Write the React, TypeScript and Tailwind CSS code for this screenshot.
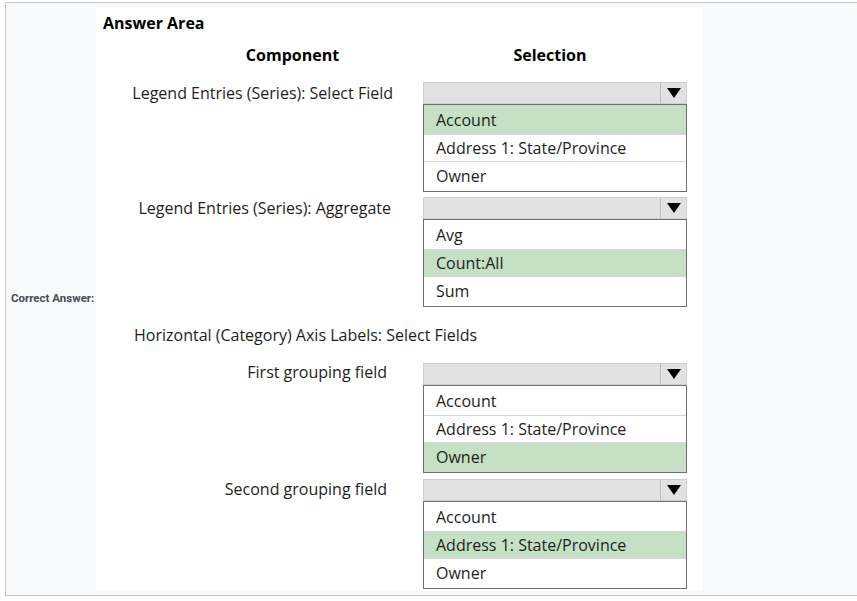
import React from 'react';

type Row = {
  label: string;
  pad: string;
  options: string[];
  correct: number;
};

const ArrowDown = () => (
  <svg width="14" height="10" viewBox="0 0 14 10" aria-hidden="true">
    <polygon points="0,0 14,0 7,10" fill="#000" />
  </svg>
);

// item heights: first/middle/last rows of the open list
const itemHeights = ['h-[29px] pt-[1px]', 'h-[27px] border-t border-[#d6d6d6]', 'h-[30px] border-t border-[#d6d6d6] pb-[1px]'];

const Dropdown: React.FC<{ options: string[]; correct: number }> = ({ options, correct }) => (
  <div className="w-[264px]">
    <div className="flex h-[22px] border border-[#cfcfcf] bg-[#e1e1e1]">
      <div className="flex-1" />
      <div className="flex w-[26px] items-center justify-center border-l border-[#bcbcbc]">
        <ArrowDown />
      </div>
    </div>
    <div className="border border-[#6f6f6f] bg-white">
      {options.map((opt, i) => (
        <div
          key={opt}
          className={`flex items-center pl-[12px] text-[#1e1e1e] ${itemHeights[i]} ${
            i === correct ? 'bg-[#c5e0c4]' : 'bg-white'
          }`}
        >
          {opt}
        </div>
      ))}
    </div>
  </div>
);

const fields = ['Account', 'Address 1: State/Province', 'Owner'];

const legendRows: Row[] = [
  { label: 'Legend Entries (Series): Select Field', pad: 'pr-0', options: fields, correct: 0 },
  { label: 'Legend Entries (Series): Aggregate', pad: 'pr-[2px]', options: ['Avg', 'Count:All', 'Sum'], correct: 1 },
];

const axisRows: Row[] = [
  { label: 'First grouping field', pad: 'pr-[6px] pb-[4px]', options: fields, correct: 2 },
  { label: 'Second grouping field', pad: 'pr-[6px] pb-[2px]', options: fields, correct: 1 },
];

const QuestionRow: React.FC<{ row: Row }> = ({ row }) => (
  <div className="flex gap-[30px]">
    <div className={`flex h-[22px] w-[297px] items-center justify-end ${row.pad}`}>
      <span className="whitespace-nowrap">{row.label}</span>
    </div>
    <Dropdown options={row.options} correct={row.correct} />
  </div>
);

export default function App() {
  return (
    <div className="min-h-[601px] bg-white pt-[2px] pl-[5px] font-['Open_Sans',sans-serif] text-[16px] text-[#1e1e1e]">
      <div className="flex h-[594px] border-t border-b border-l border-[#c4c4c4] bg-[#f8f9fa]">
        <div className="flex w-[90px] shrink-0 items-center pl-[5px]">
          <span className="font-['Roboto',sans-serif] text-[11.5px] font-bold text-[#464b58]">Correct Answer:</span>
        </div>
        <div className="mt-[5px] h-[583px] w-[607px] shrink-0 bg-white">
          <div className="pt-[4px] pl-[7px] text-[16px] leading-[22px] font-bold text-black">Answer Area</div>
          <div className="mt-[10px] flex gap-[30px] text-[16px] leading-[22px] font-bold text-black">
            <div className="w-[297px] pl-[96px] text-center">Component</div>
            <div className="w-[264px] pr-[10px] text-center">Selection</div>
          </div>
          <div className="mt-[16px] flex flex-col gap-[5px]">
            {legendRows.map((r) => (
              <QuestionRow key={r.label} row={r} />
            ))}
          </div>
          <div className="mt-[17px] h-[22px] pl-[38px] leading-[22px] whitespace-nowrap">
            Horizontal (Category) Axis Labels: Select Fields
          </div>
          <div className="mt-[17px] flex flex-col gap-[6px]">
            {axisRows.map((r) => (
              <QuestionRow key={r.label} row={r} />
            ))}
          </div>
        </div>
      </div>
    </div>
  );
}
